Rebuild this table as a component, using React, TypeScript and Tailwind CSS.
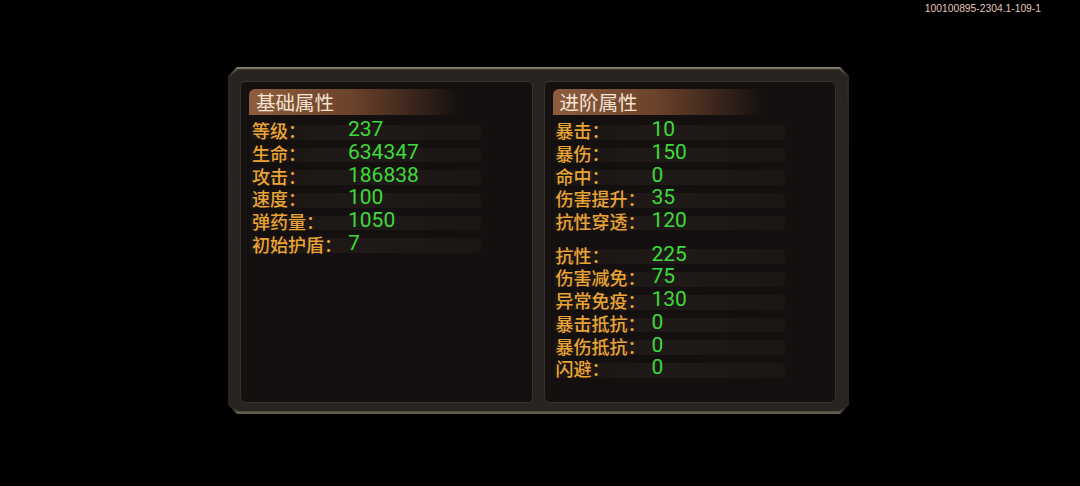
const basic: [string, string][] = [
  ['等级：', '237'],
  ['生命：', '634347'],
  ['攻击：', '186838'],
  ['速度：', '100'],
  ['弹药量：', '1050'],
  ['初始护盾：', '7'],
];

const advanced: [string, string][] = [
  ['暴击：', '10'],
  ['暴伤：', '150'],
  ['命中：', '0'],
  ['伤害提升：', '35'],
  ['抗性穿透：', '120'],
];

const defense: [string, string][] = [
  ['抗性：', '225'],
  ['伤害减免：', '75'],
  ['异常免疫：', '130'],
  ['暴击抵抗：', '0'],
  ['暴伤抵抗：', '0'],
  ['闪避：', '0'],
];

function StatRow({ label, value }: { label: string; value: string }) {
  return (
    <div className="relative flex h-[22.7px] items-center">
      <div className="absolute left-[-2px] right-0 top-[6px] bottom-[2px] bg-gradient-to-r from-[#1b1613] via-[#1f1a17] to-[#1b1614] rounded-sm" />
      <span className="relative w-[96px] shrink-0 text-[18px] font-medium leading-[20px] text-[#eaa433] [font-family:'Noto_Sans_CJK_SC',sans-serif] whitespace-nowrap">
        {label}
      </span>
      <span className="relative text-[21px] leading-[20px] pb-[2px] text-[#3ddb3a] [font-family:Roboto,sans-serif]">
        {value}
      </span>
    </div>
  );
}

function Panel({ title, children }: { title: string; children: React.ReactNode }) {
  return (
    <div className="flex-1 rounded-md border border-[#3a312c] bg-[#151010] pt-[7px] pl-[8px]">
      <div className="h-[26px] w-[210px] rounded-tl-[6px] bg-gradient-to-r from-[#8e5d3d] via-[#6a412a] to-transparent pl-[7px] flex items-center">
        <span className="text-[19.5px] leading-none text-[#f4e4d4] [font-family:'Noto_Sans_CJK_SC',sans-serif]">
          {title}
        </span>
      </div>
      <div className="mt-[4px] pl-[3px] w-[232px]">{children}</div>
    </div>
  );
}

export default function App() {
  return (
    <div className="relative w-[1080px] h-[486px] bg-black overflow-hidden">
      <div className="absolute right-[39px] top-[1px] text-[10.3px] text-[#e6c6bd] [font-family:'Liberation_Sans',sans-serif]">
        100100895-2304.1-109-1
      </div>
      <div className="pt-[67px] pl-[228px]">
        <div className="w-[621px] h-[347px] bg-[linear-gradient(to_bottom,#948a7c_0px,#5a5148_3px,#2e2824_10px,#2a2421_calc(100%-6px),#70685c_100%)] p-[2px] pb-[3px] [clip-path:polygon(9px_0,calc(100%-9px)_0,100%_9px,100%_calc(100%-9px),calc(100%-9px)_100%,9px_100%,0_calc(100%-9px),0_9px)]">
          <div className="h-full w-full bg-[#2a2421] border-t border-[#3e3732] flex gap-[11px] pt-[11px] pb-[8px] pl-[10px] pr-[11px] [clip-path:polygon(8px_0,calc(100%-8px)_0,100%_8px,100%_calc(100%-8px),calc(100%-8px)_100%,8px_100%,0_calc(100%-8px),0_8px)]">
            <Panel title="基础属性">
              {basic.map(([l, v]) => (
                <StatRow key={l} label={l} value={v} />
              ))}
            </Panel>
            <Panel title="进阶属性">
              {advanced.map(([l, v]) => (
                <StatRow key={l} label={l} value={v} />
              ))}
              <div className="h-[11px]" />
              {defense.map(([l, v]) => (
                <StatRow key={l} label={l} value={v} />
              ))}
            </Panel>
          </div>
        </div>
      </div>
    </div>
  );
}
